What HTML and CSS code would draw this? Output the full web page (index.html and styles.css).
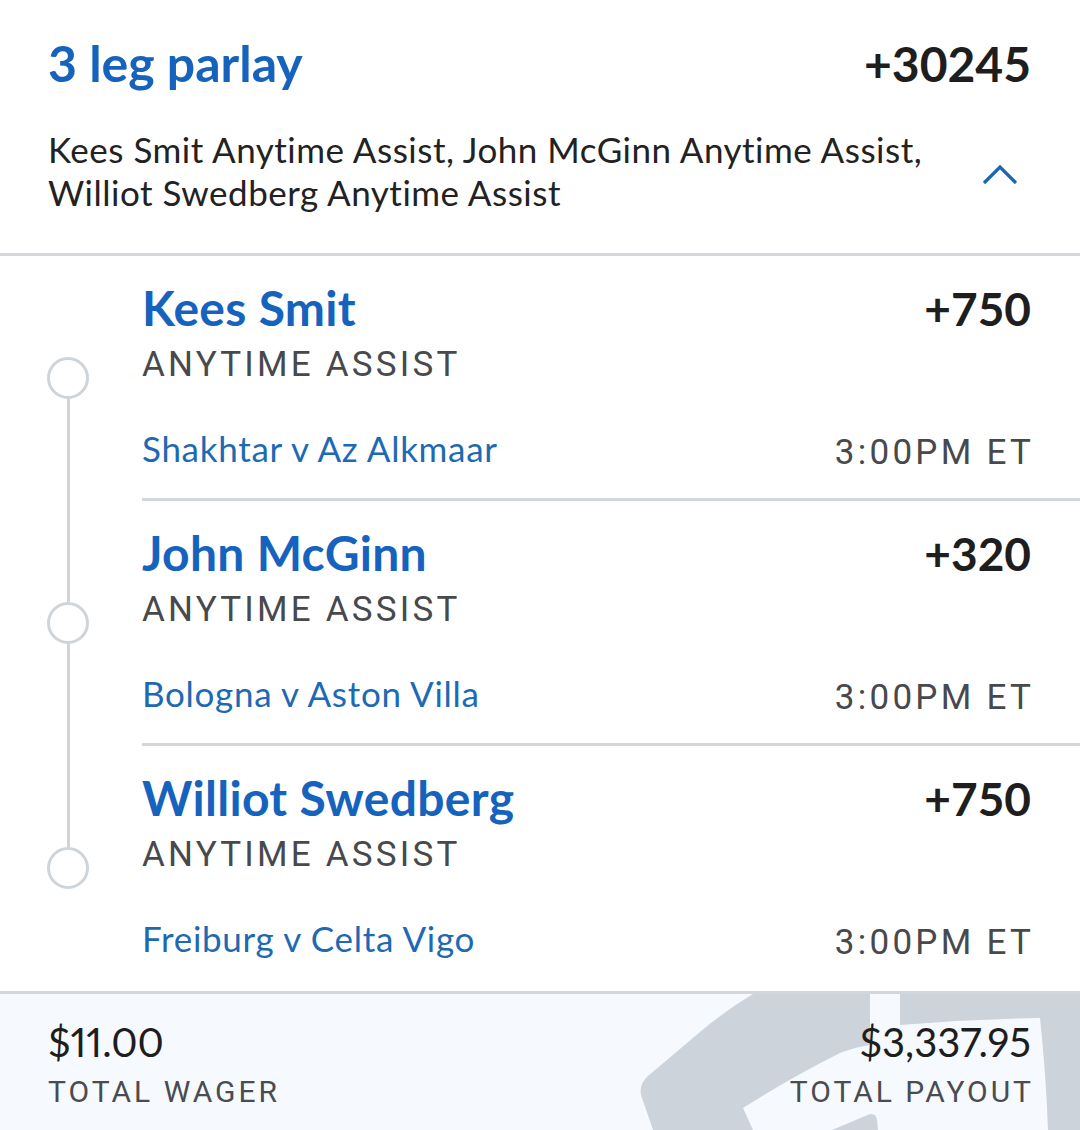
FILE: index.html
```html
<!DOCTYPE html>
<html lang="en">
<head>
<meta charset="utf-8">
<title>3 leg parlay</title>
<link rel="stylesheet" href="styles.css">
</head>
<body>
<div class="card">
  <header class="header">
    <div class="title-row">
      <h1 class="title">3 leg parlay</h1>
      <div class="odds big">+30245</div>
    </div>
    <div class="desc-row">
      <p class="desc">Kees Smit Anytime Assist, John McGinn Anytime Assist, Williot Swedberg Anytime Assist</p>
      <svg class="chevron" width="36" height="22" viewBox="0 0 36 22"><polyline points="2,19 18,3 34,19" fill="none" stroke="#1a66b3" stroke-width="3.2"/></svg>
    </div>
  </header>

  <section class="legs">
    <div class="leg first">
      <div class="rail"><span class="seg top"></span><span class="dot"></span><span class="seg bottom"></span></div>
      <div class="leg-body">
        <div class="leg-row">
          <div class="name">Kees Smit</div>
          <div class="odds">+750</div>
        </div>
        <div class="market">ANYTIME ASSIST</div>
        <div class="event-row">
          <div class="event">Shakhtar v Az Alkmaar</div>
          <div class="time">3:00PM ET</div>
        </div>
      </div>
    </div>
    <div class="leg">
      <div class="rail"><span class="seg top"></span><span class="dot"></span><span class="seg bottom"></span></div>
      <div class="leg-body">
        <div class="leg-row">
          <div class="name">John McGinn</div>
          <div class="odds">+320</div>
        </div>
        <div class="market">ANYTIME ASSIST</div>
        <div class="event-row">
          <div class="event">Bologna v Aston Villa</div>
          <div class="time">3:00PM ET</div>
        </div>
      </div>
    </div>
    <div class="leg last">
      <div class="rail"><span class="seg top"></span><span class="dot"></span><span class="seg bottom"></span></div>
      <div class="leg-body">
        <div class="leg-row">
          <div class="name">Williot Swedberg</div>
          <div class="odds">+750</div>
        </div>
        <div class="market">ANYTIME ASSIST</div>
        <div class="event-row">
          <div class="event">Freiburg v Celta Vigo</div>
          <div class="time">3:00PM ET</div>
        </div>
      </div>
    </div>
  </section>

  <footer class="footer">
    <svg class="watermark" width="1080" height="136" viewBox="0 0 1080 136" aria-hidden="true">
      <path fill="#cdd3db" d="M653 136 L641 101 Q639 90 648 82 L700 38 Q726 16 753 0 H1080 V136 Z"/>
      <path fill="#f6f9fd" d="M753 136 L743 114 Q790 84 840 59 Q856 53 870 51 V0 H900 V31 Q970 25 1040 24 Q1046 80 1048 136 Z"/>
      <path fill="#cdd3db" d="M832 136 L870 120 Q876 119 877 126 L878 136 Z"/>
    </svg>
    <div class="total">
      <div class="amount">$11.00</div>
      <div class="label">TOTAL WAGER</div>
    </div>
    <div class="total right">
      <div class="amount">$3,337.95</div>
      <div class="label">TOTAL PAYOUT</div>
    </div>
  </footer>
</div>
</body>
</html>
```

FILE: styles.css
```css
* { box-sizing: border-box; }

html, body {
  margin: 0;
  padding: 0;
  background: #ffffff;
}

body {
  width: 1080px;
  height: 1130px;
  overflow: hidden;
  font-family: "Lato", "Open Sans", sans-serif;
  font-variant-ligatures: none;
  color: #1e1e1e;
}

.card {
  display: flex;
  flex-direction: column;
  height: 1130px;
}

/* Header */
.header {
  padding: 33px 49px 39px 48px;
  border-bottom: 3px solid #d3d7dc;
}

.title-row {
  display: flex;
  justify-content: space-between;
  align-items: baseline;
  height: 60px;
}

.title {
  margin: 0;
  font-size: 50px;
  line-height: 60px;
  font-weight: 700;
  color: #1563bd;
}

.odds {
  font-size: 46px;
  line-height: 56px;
  font-weight: 700;
  color: #1e1e1e;
}

.odds.big {
  font-size: 48px;
  line-height: 60px;
}

.desc-row {
  display: flex;
  align-items: center;
  margin-top: 35px;
}

.desc {
  margin: 0;
  flex: 1;
  max-width: 915px;
  font-size: 35px;
  line-height: 43px;
  letter-spacing: 0.5px;
  color: #222222;
}

.chevron {
  margin-left: auto;
  margin-right: 13px;
  margin-top: 8px;
}

/* Legs */
.legs {
  display: flex;
  flex-direction: column;
}

.leg {
  display: flex;
}

.rail {
  width: 142px;
  flex: none;
  display: flex;
  flex-direction: column;
  align-items: flex-start;
  padding-left: 47px;
}

.seg {
  display: block;
  width: 3px;
  margin-left: 19.5px;
  background: #cfd4d9;
}

.seg.top { height: 101px; flex: none; }
.seg.bottom { flex: 1; }
.leg.first .seg.top { background: transparent; }
.leg.last .seg.bottom { background: transparent; }

.dot {
  display: block;
  width: 42px;
  height: 42px;
  border: 3px solid #cfd4d9;
  border-radius: 50%;
  flex: none;
}

.leg-body {
  flex: 1;
  padding: 24px 49px 23px 0;
  border-bottom: 3px solid #d3d7dc;
}

.leg.last .leg-body {
  border-bottom: none;
  padding-bottom: 26px;
}

.leg-row {
  display: flex;
  justify-content: space-between;
  align-items: baseline;
  height: 56px;
}

.name {
  font-size: 48px;
  line-height: 56px;
  font-weight: 700;
  letter-spacing: 0.3px;
  color: #1563bd;
}

.market {
  margin-top: 7px;
  font-family: "Roboto", "Liberation Sans", sans-serif;
  font-size: 35px;
  line-height: 44px;
  letter-spacing: 3.2px;
  color: #48494c;
}

.event-row {
  display: flex;
  justify-content: space-between;
  align-items: flex-start;
  margin-top: 39px;
}

.event {
  font-size: 35px;
  line-height: 44px;
  letter-spacing: 0.7px;
  color: #1e69b3;
}

.time {
  margin-top: 5px;
  font-family: "Roboto", "Liberation Sans", sans-serif;
  font-size: 35px;
  line-height: 44px;
  letter-spacing: 3.3px;
  margin-right: -3.3px;
  color: #48494c;
}

/* Footer */
.footer {
  position: relative;
  flex: 1;
  display: flex;
  justify-content: space-between;
  padding: 24px 49px 0 48px;
  background: #f6f9fd;
  border-top: 3px solid #d3d7dc;
  overflow: hidden;
}

.watermark {
  position: absolute;
  left: 0;
  top: 0;
}

.total {
  position: relative;
  display: flex;
  flex-direction: column;
}

.total.right {
  align-items: flex-end;
}

.amount {
  font-size: 40px;
  line-height: 48px;
  font-variant-numeric: proportional-nums;
  color: #1e1e1e;
}

.label {
  margin-top: 6px;
  font-family: "Roboto", "Liberation Sans", sans-serif;
  font-size: 30px;
  line-height: 40px;
  letter-spacing: 3px;
  color: #4a4c50;
}

.total.right .label {
  margin-right: -3px;
}
```
